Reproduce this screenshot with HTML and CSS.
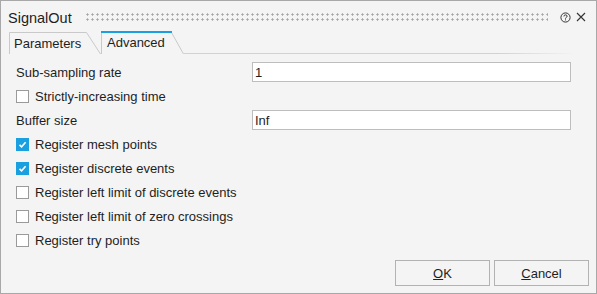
FILE: index.html
```html
<!DOCTYPE html>
<html lang="en">
<head>
    <meta charset="UTF-8">
    <title>SignalOut</title>
    <link rel="stylesheet" href="styles.css">
</head>
<body>
    <div class="dialog">
        <!-- title bar -->
        <div class="titlebar">
            <span class="title">SignalOut</span>
            <div class="grip"></div>
            <svg class="icon help" width="11" height="11" viewBox="0 0 11 11">
                <circle cx="5.5" cy="5.5" r="4.6" fill="none" stroke="#333" stroke-width="1"/>
                <path d="M3.9 4.4 Q3.9 2.9 5.5 2.9 Q7.1 2.9 7.1 4.2 Q7.1 5 6.1 5.5 Q5.5 5.8 5.5 6.6" fill="none" stroke="#333" stroke-width="1"/>
                <rect x="5" y="7.4" width="1" height="1" fill="#333"/>
            </svg>
            <svg class="icon close" width="10" height="10" viewBox="0 0 10 10">
                <path d="M1 1 L9 9 M9 1 L1 9" stroke="#333" stroke-width="1.1"/>
            </svg>
        </div>

        <!-- tabs -->
        <div class="tabbar">
            <div class="tab tab-params">
                <svg class="tab-shape" viewBox="0 0 92 22" preserveAspectRatio="none">
                    <polyline points="0.5,22 0.5,0.5 77.5,0.5 91.5,22" fill="none" stroke="#c9c9c9" stroke-width="1"/>
                </svg>
                <span>Parameters</span>
            </div>
            <div class="tab tab-active">
                <svg class="tab-shape" viewBox="0 0 83 23" preserveAspectRatio="none">
                    <polyline points="0.5,23 0.5,1.5" fill="none" stroke="#c9c9c9" stroke-width="1"/>
                    <polyline points="70.5,1.5 82.5,23" fill="none" stroke="#c9c9c9" stroke-width="1"/>
                    <rect x="0" y="0" width="71" height="2" fill="#1a9fe0"/>
                </svg>
                <span>Advanced</span>
            </div>
            <div class="tab-line"></div>
        </div>

        <!-- advanced options -->
        <div class="panel">
            <div class="row">
                <label class="label">Sub-sampling rate</label>
                <input class="field" type="text" value="1">
            </div>
            <div class="row check-row">
                <span class="box"></span>
                <span>Strictly-increasing time</span>
            </div>
            <div class="row">
                <label class="label">Buffer size</label>
                <input class="field" type="text" value="Inf">
            </div>
            <div class="row check-row">
                <span class="box checked"><svg width="13" height="13" viewBox="0 0 13 13"><polyline points="3.5,6.8 5.6,8.8 9.6,4.3" fill="none" stroke="#fff" stroke-width="1.6"/></svg></span>
                <span>Register mesh points</span>
            </div>
            <div class="row check-row">
                <span class="box checked"><svg width="13" height="13" viewBox="0 0 13 13"><polyline points="3.5,6.8 5.6,8.8 9.6,4.3" fill="none" stroke="#fff" stroke-width="1.6"/></svg></span>
                <span>Register discrete events</span>
            </div>
            <div class="row check-row">
                <span class="box"></span>
                <span>Register left limit of discrete events</span>
            </div>
            <div class="row check-row">
                <span class="box"></span>
                <span>Register left limit of zero crossings</span>
            </div>
            <div class="row check-row">
                <span class="box"></span>
                <span>Register try points</span>
            </div>
        </div>

        <!-- buttons -->
        <div class="footer">
            <button class="btn"><u>O</u>K</button>
            <button class="btn"><u>C</u>ancel</button>
        </div>
    </div>
</body>
</html>
```

FILE: styles.css
```css
body {
    margin: 0;
    padding: 0;
    background: #f4f4f4;
    font-family: "Liberation Sans", Arial, sans-serif;
    font-size: 13px;
    color: #1e1e1e;
}

.dialog {
    width: 597px;
    height: 294px;
    box-sizing: border-box;
    border: 1px solid #a8a8a8;
    background: #f4f4f4;
    display: flex;
    flex-direction: column;
}

/* title bar */
.titlebar {
    height: 30px;
    display: flex;
    align-items: center;
    padding: 0 10px 0 7px;
}

.title {
    font-size: 14.5px;
    margin-top: 3px;
}

.grip {
    flex: 1;
    height: 10px;
    margin: 2px 12px 0 14px;
    background-image: radial-gradient(circle at 1.5px 2.5px, #a6a6a6 0.9px, transparent 1.3px);
    background-size: 5px 5px;
}

.icon {
    display: block;
    margin-top: 2px;
}

.help {
    margin-right: 5px;
}

/* tabs */
.tabbar {
    height: 23px;
    display: flex;
    align-items: flex-end;
    padding-left: 8px;
    padding-right: 20px;
}

.tab {
    position: relative;
    display: flex;
    align-items: center;
    box-sizing: border-box;
}

.tab span {
    position: relative;
}

.tab-shape {
    position: absolute;
    left: 0;
    top: 0;
    width: 100%;
    height: 100%;
}

.tab-params {
    width: 92px;
    height: 22px;
    padding: 1px 0 0 5px;
}

.tab-active {
    width: 83px;
    height: 23px;
    padding-left: 6px;
}

.tab-line {
    flex: 1;
    height: 1px;
    background: linear-gradient(to right, #d2d2d2 80%, rgba(210, 210, 210, 0));
}

/* panel */
.panel {
    padding: 6px 0 0 15px;
    display: flex;
    flex-direction: column;
}

.row {
    height: 24px;
    display: flex;
    align-items: center;
}

.label {
    width: 236px;
}

.field {
    width: 319px;
    height: 20px;
    box-sizing: border-box;
    border: 1px solid #bdbdbd;
    background: #fff;
    font: inherit;
    color: #1e1e1e;
    padding: 0 2px;
    margin: 0;
    outline: none;
}

.check-row {
    gap: 6px;
}

.box {
    width: 13px;
    height: 13px;
    box-sizing: border-box;
    border: 1px solid #9a9a9a;
    background: #fff;
    display: block;
}

.box.checked {
    border: none;
    background: #1a9fe0;
}

.box svg {
    display: block;
}

/* buttons */
.footer {
    margin-top: auto;
    display: flex;
    justify-content: flex-end;
    gap: 4px;
    padding: 0 7px 7px 0;
}

.btn {
    width: 95px;
    height: 26px;
    box-sizing: border-box;
    border: 1px solid #b2b2b2;
    background: #f4f4f4;
    font: inherit;
    color: #1e1e1e;
    padding: 0;
    margin: 0;
}
```
